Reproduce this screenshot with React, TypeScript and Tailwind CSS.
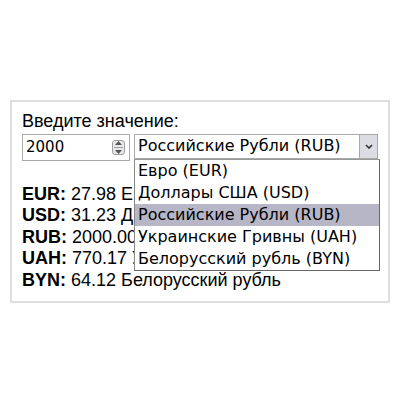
import React from "react";

const OPTIONS = [
  "Евро (EUR)",
  "Доллары США (USD)",
  "Российские Рубли (RUB)",
  "Украинские Гривны (UAH)",
  "Белорусский рубль (BYN)",
];

const RESULTS = [
  { code: "EUR", value: "27.98 Евро" },
  { code: "USD", value: "31.23 Доллары США" },
  { code: "RUB", value: "2000.00 Российские Рубли" },
  { code: "UAH", value: "770.17 Украинские Гривны" },
  { code: "BYN", value: "64.12 Белорусский рубль" },
];

export default function App() {
  return (
    <div className="w-[400px] h-[400px] bg-white pt-[100px] pl-[10px] font-['Liberation_Sans',Arial,sans-serif] text-black">
      <div className="w-[380px] h-[203px] border-2 border-[#dedede] pl-[10px] pt-[9px]">
        <div className="text-[18px] leading-[21.6px]">Введите значение:</div>

        <div className="relative flex items-start">
          {/* number input */}
          <div className="relative w-[108px] h-[27px] mt-[1px] border border-[#a9a9a9] bg-white flex items-center">
            <span className="pl-[3px] text-[15px] font-['DejaVu_Sans',sans-serif]">2000</span>
            <div className="absolute right-[4px] top-[5px] w-[13px] h-[15px] rounded-[3px] border border-[#a0a0a0] bg-[#e8e8ec] flex flex-col items-center justify-center gap-[2px]">
              <svg width="7" height="4" viewBox="0 0 7 4">
                <path d="M0 4 L3.5 0 L7 4 Z" fill="#555" />
              </svg>
              <div className="w-[9px] h-px bg-[#a0a0a0]" />
              <svg width="7" height="4" viewBox="0 0 7 4">
                <path d="M0 0 L3.5 4 L7 0 Z" fill="#555" />
              </svg>
            </div>
          </div>

          {/* select */}
          <div className="relative ml-[4px] mt-[1px]">
            <div className="w-[244px] h-[25px] border border-[#a9a9a9] bg-white flex items-center">
              <span className="flex-1 pl-[3px] text-[16px] font-['DejaVu_Sans',sans-serif] whitespace-nowrap">
                Российские Рубли (RUB)
              </span>
              <div className="w-[19px] h-[25px] -mr-px border border-[#a9a9a9] bg-[#dcdce4] flex items-center justify-center">
                <svg width="8" height="5" viewBox="0 0 8 5">
                  <path d="M1 1 L4 4 L7 1" stroke="#333" strokeWidth="1.6" fill="none" />
                </svg>
              </div>
            </div>

            {/* open dropdown list */}
            <div className="absolute left-0 top-[25px] w-[246px] border border-[#666] border-t-[#999] border-l-[#888] bg-white font-['DejaVu_Sans',sans-serif] text-[16px] z-10">
              {OPTIONS.map((o, i) => (
                <div
                  key={o}
                  className={
                    i === 2
                      ? "h-[22px] leading-[22px] pl-[3px] bg-[#b6b6c6] whitespace-nowrap"
                      : "h-[22px] leading-[22px] pl-[3px] whitespace-nowrap"
                  }
                >
                  {o}
                </div>
              ))}
            </div>
          </div>
        </div>

        <div className="mt-[23px] text-[18px] leading-[21.6px]">
          {RESULTS.map((r) => (
            <div key={r.code} className="whitespace-nowrap">
              <b>{r.code}:</b> {r.value}
            </div>
          ))}
        </div>
      </div>
    </div>
  );
}
